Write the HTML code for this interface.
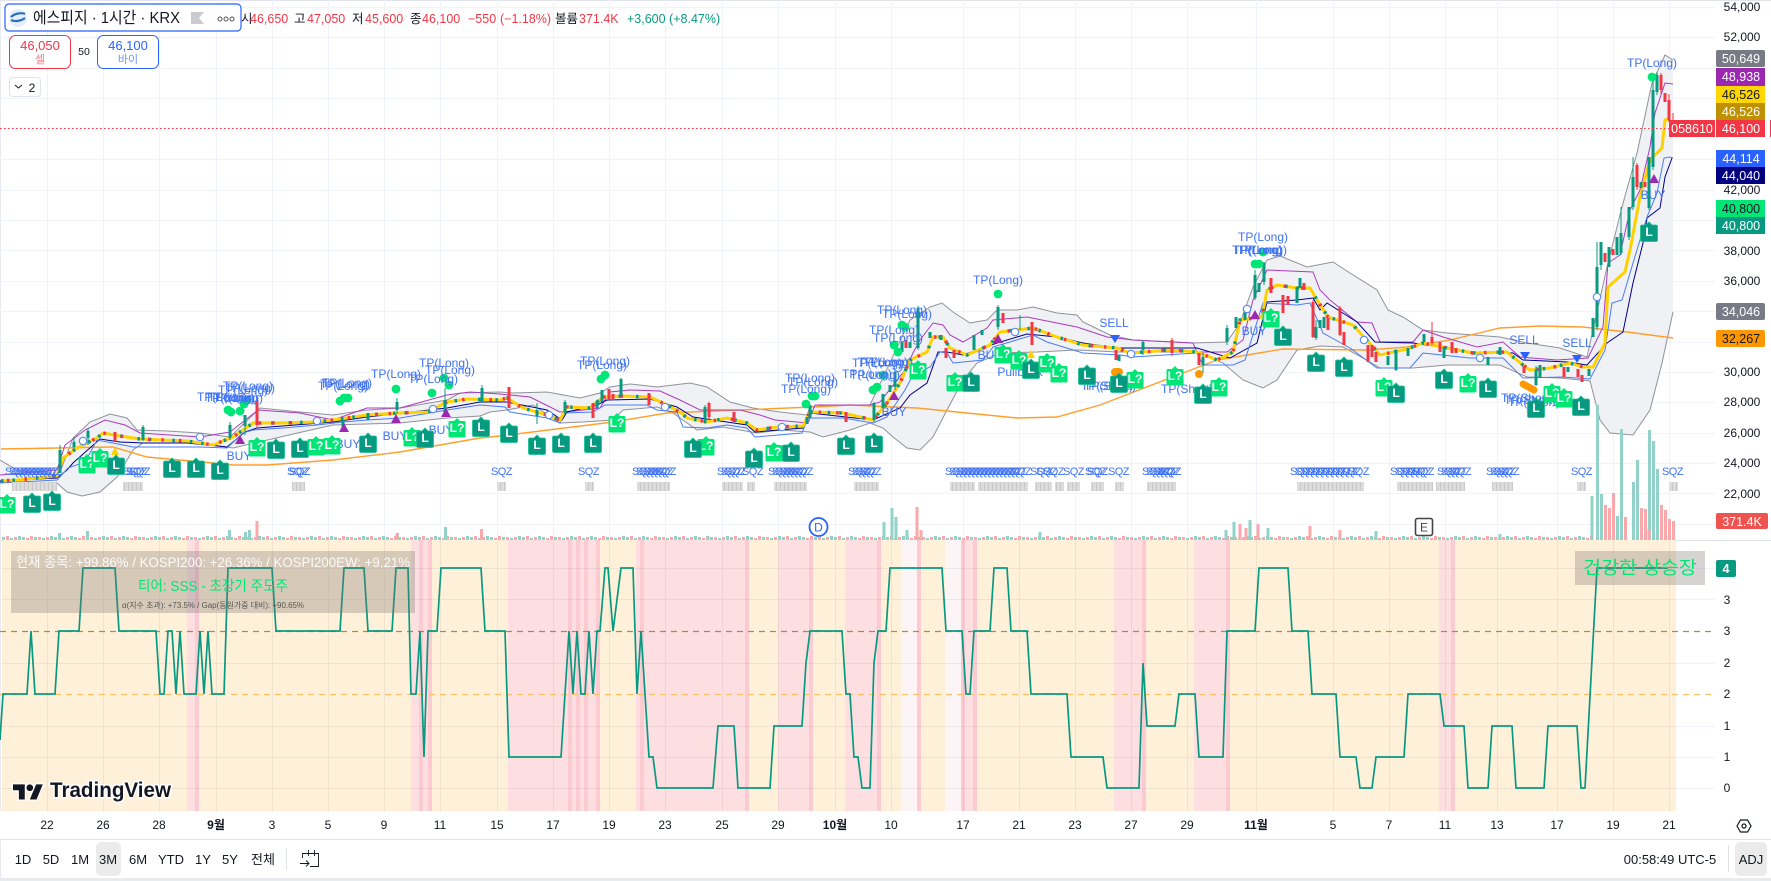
<!DOCTYPE html>
<html lang="ko"><head><meta charset="utf-8"><title>에스피지 차트</title>
<style>
html,body{margin:0;padding:0;background:#fff;width:1771px;height:881px;overflow:hidden}
svg{display:block;font-family:"Liberation Sans","Noto Sans CJK KR",sans-serif}
.ax text{font-size:12px;fill:#131722;text-anchor:middle}
.lb text{font-size:12.5px;text-anchor:middle;fill:#fff}
.tp text{font-size:12px;fill:#3f72f5;text-anchor:middle}
.sq text{font-size:11px;fill:#3f72f5;letter-spacing:-.6px}
.mk text{font-size:12px;font-weight:bold;fill:#fff;text-anchor:middle}
.g{fill:#00e676}.t{fill:#089981;stroke:#14c48f;stroke-width:.8}
.bt text{font-size:13px;fill:#131722;text-anchor:middle}
.lg text{font-size:12.5px;fill:#f23645}
.dots circle{r:4.4px}
</style></head><body>
<svg width="1771" height="881" viewBox="0 0 1771 881" xmlns="http://www.w3.org/2000/svg">
<defs>
<path id="b" d="M-7-7H-3L0-10 3-7H7Q8.5-7 8.5-5.5V8Q8.5 9.5 7 9.5H-7Q-8.5 9.5-8.5 8V-5.5Q-8.5-7-7-7Z"/>
<pattern id="vp" patternUnits="userSpaceOnUse" x="2" y="520" width="52" height="20">
<path d="M1.5 20v-3M9.5 20v-2M17.5 20v-4M21.5 20v-3M33.5 20v-3M41.5 20v-2M49.5 20v-4" stroke="#92d2c9" stroke-width="3" fill="none"/>
<path d="M5.5 20v-4M13.5 20v-3M25.5 20v-2M29.5 20v-4M37.5 20v-3M45.5 20v-3" stroke="#f9a8ab" stroke-width="3" fill="none"/>
</pattern>
<pattern id="bk" patternUnits="userSpaceOnUse" x="0" y="482" width="4" height="9">
<rect width="4" height="9" fill="#dcdcdc"/><rect width="1" height="9" fill="#c9c9c9"/>
</pattern>
<clipPath id="ck"><rect x="0" y="250" width="1590" height="250"/></clipPath>
<polyline id="yl" fill="none" points="1,481 17,480 57,476 63,458 77,448 97,438 103,433 120,436 140,439 187,441 213,445 233,437 243,430 253,423 283,423 317,422 347,418 367,415 400,413 427,412 447,402 467,399 500,400 507,398 523,408 547,415 560,420 567,407 590,408 603,397 623,396 650,397 667,405 680,412 687,418 707,422 727,418 747,423 757,430 777,427 803,426 810,412 843,413 873,420 887,403 900,383 910,360 927,352 933,337 943,337 950,348 967,355 990,345 1000,332 1033,328 1057,337 1083,345 1117,348 1130,353 1170,350 1197,352 1217,360 1233,352 1240,320 1262,317 1267,290 1277,285 1297,288 1310,288 1317,300 1328,317 1353,325 1373,347 1380,355 1407,349 1423,343 1447,348 1473,353 1507,352 1523,365 1530,370 1550,368 1570,363 1583,367 1593,367 1605,343 1608,287 1625,272 1630,250 1640,197 1650,160 1662,148 1665,120 1670,119"/>
</defs>
<rect width="1771" height="881" fill="#fff"/>
<rect width="1771" height="1" fill="#e0e3eb"/>
<rect width="1" height="878" fill="#e8eaf0"/>

<!-- main grid -->
<path fill="none" stroke="#f0f3fa" d="M0 7.5H1715M0 37.5H1715M0 68.5H1715M0 98.5H1715M0 128.5H1715M0 159.5H1715M0 190.5H1715M0 220.5H1715M0 250.5H1715M0 281.5H1715M0 311.5H1715M0 342.5H1715M0 372.5H1715M0 402.5H1715M0 433.5H1715M0 463.5H1715M0 493.5H1715M0 524.5H1715M47.5 0V811M103.5 0V811M159.5 0V811M216.5 0V811M272.5 0V811M328.5 0V811M384.5 0V811M440.5 0V811M497.5 0V811M553.5 0V811M609.5 0V811M665.5 0V811M722.5 0V811M778.5 0V811M835.5 0V811M891.5 0V811M963.5 0V811M1019.5 0V811M1075.5 0V811M1131.5 0V811M1187.5 0V811M1256.5 0V811M1333.5 0V811M1389.5 0V811M1445.5 0V811M1497.5 0V811M1557.5 0V811M1613.5 0V811M1669.5 0V811"/>

<!-- bollinger fill -->
<path fill="#f0f1f4" d="M0 460L17 470 57 475 62 467 73 438 90 422 110 414 127 418 137 430 167 431 200 433 230 437 260 408 300 412 333 415 367 410 400 408 447 400 460 393 500 392 513 393 547 392 580 398 600 393 610 387 630 384 657 387 690 383 707 387 730 402 753 408 780 412 807 415 810 407 830 405 870 405 910 320 930 307 942 303 953 312 970 323 987 320 997 310 1017 310 1033 307 1057 313 1077 315 1083 322 1110 335 1133 340 1193 343 1227 342 1240 323 1253 287 1267 260 1280 256 1307 267 1333 262 1350 273 1377 290 1388 310 1403 317 1423 330 1447 333 1500 337 1527 343 1560 348 1587 357 1607 267 1622 207 1637 153 1652 83 1665 55 1673 60V312L1662 363 1650 410 1633 435 1610 433 1600 420 1590 381 1560 378 1527 377 1500 365 1447 365 1413 368 1380 368 1363 358 1343 347 1320 346 1297 350 1277 380 1263 388 1243 380 1223 363 1197 352 1117 352 1077 350 1037 352 1000 353 977 363 963 380 947 410 933 437 920 450 907 448 893 437 883 428 870 423 850 430 823 437 810 432 780 430 757 433 723 427 697 430 673 413 657 407 623 410 613 420 583 422 560 423 533 405 507 410 490 412 480 416 447 418 400 423 333 425 302 432 233 448 200 443 143 443 133 450 117 477 100 492 82 496 67 492 57 483 0 482Z"/>
<path fill="none" stroke="#8f9299" d="M0 460L17 470 57 475 62 467 73 438 90 422 110 414 127 418 137 430 167 431 200 433 230 437 260 408 300 412 333 415 367 410 400 408 447 400 460 393 500 392 513 393 547 392 580 398 600 393 610 387 630 384 657 387 690 383 707 387 730 402 753 408 780 412 807 415 810 407 830 405 870 405 910 320 930 307 942 303 953 312 970 323 987 320 997 310 1017 310 1033 307 1057 313 1077 315 1083 322 1110 335 1133 340 1193 343 1227 342 1240 323 1253 287 1267 260 1280 256 1307 267 1333 262 1350 273 1377 290 1388 310 1403 317 1423 330 1447 333 1500 337 1527 343 1560 348 1587 357 1607 267 1622 207 1637 153 1652 83 1665 55 1673 60M1673 312L1662 363 1650 410 1633 435 1610 433 1600 420 1590 381 1560 378 1527 377 1500 365 1447 365 1413 368 1380 368 1363 358 1343 347 1320 346 1297 350 1277 380 1263 388 1243 380 1223 363 1197 352 1117 352 1077 350 1037 352 1000 353 977 363 963 380 947 410 933 437 920 450 907 448 893 437 883 428 870 423 850 430 823 437 810 432 780 430 757 433 723 427 697 430 673 413 657 407 623 410 613 420 583 422 560 423 533 405 507 410 490 412 480 416 447 418 400 423 333 425 302 432 233 448 200 443 143 443 133 450 117 477 100 492 82 496 67 492 57 483 0 482"/>

<!-- orange MA -->
<polyline fill="none" stroke="#ff9f2e" stroke-width="1.4" points="1,449 113,447 147,457 213,463 233,465 267,465 333,460 400,452 480,438 500,436 613,422 667,413 813,407 850,405 917,408 1017,418 1057,417 1100,405 1183,373 1217,360 1283,349 1367,350 1407,347 1450,340 1500,328 1540,326 1583,327 1627,332 1673,338"/>
<!-- purple -->
<polyline fill="none" stroke="#a93cc0" stroke-width="1" points="0,475 57,470 65,445 85,430 105,420 125,425 140,433 200,437 230,432 258,410 300,413 333,420 367,408 400,408 447,395 470,392 500,394 530,397 560,412 575,411 600,408 610,392 630,390 660,391 680,400 700,410 740,410 760,415 775,420 808,423 815,405 870,405 880,402 905,370 913,353 920,340 933,323 943,325 950,335 963,342 987,328 993,320 1027,317 1057,323 1077,327 1107,337 1133,340 1193,343 1197,352 1227,352 1243,340 1253,300 1267,270 1313,272 1320,290 1330,300 1357,322 1372,323 1380,342 1413,342 1423,330 1443,337 1477,347 1503,342 1520,357 1557,360 1588,358 1603,327 1608,263 1620,255 1630,210 1640,190 1650,147 1655,113 1665,83 1673,84"/>
<!-- navy -->
<polyline fill="none" stroke="#00008b" stroke-width="1" points="0,481 57,478 67,470 73,463 100,439 120,442 143,443 187,443 227,447 245,432 257,428 333,422 367,417 447,408 480,402 507,402 547,410 562,420 567,412 597,405 607,400 650,399 677,407 693,417 747,425 755,432 803,428 810,413 873,420 900,408 910,395 927,383 938,352 947,352 963,355 997,343 1027,334 1057,337 1083,343 1117,348 1197,348 1230,358 1257,343 1267,302 1297,300 1313,298 1320,310 1327,303 1357,322 1375,342 1413,343 1473,352 1513,353 1523,360 1567,362 1587,365 1607,343 1623,332 1633,283 1643,243 1647,218 1660,208 1665,177 1672,158"/>
<!-- blue -->
<polyline fill="none" stroke="#4a7bf7" stroke-width="1" points="0,483 57,480 68,468 85,462 97,440 113,443 133,447 167,447 200,447 227,448 243,433 253,430 283,428 317,425 343,422 367,420 400,418 447,410 480,405 505,407 510,412 547,418 560,423 565,413 593,412 605,405 647,405 657,410 677,412 683,427 707,428 727,425 747,428 755,437 802,433 808,418 843,418 873,423 887,417 905,390 913,375 930,367 940,352 947,353 953,363 983,360 993,347 1033,335 1047,342 1083,353 1120,355 1133,357 1197,353 1203,365 1233,365 1245,360 1263,303 1297,305 1310,303 1323,333 1350,348 1377,368 1410,368 1423,353 1470,358 1503,358 1523,378 1563,377 1590,379 1605,350 1612,303 1622,300 1633,263 1647,217 1657,193 1664,158 1670,157 1673,158"/>
<!-- yellow -->
<use href="#yl" stroke="#ffd100" stroke-width="3"/>
<g clip-path="url(#ck)">
<use href="#yl" stroke="#089981" stroke-width="3.5" stroke-dasharray="2.5 9 2.5 21 2.5 15"/>
<use href="#yl" stroke="#f23645" stroke-width="3.5" stroke-dasharray="2.5 15 2.5 25 2.5 11" stroke-dashoffset="-6"/>
</g>

<!-- candles wicks -->
<path fill="none" stroke="#089981" stroke-width="1" d="M60 445V473M74 437V450M88 428V445M143 425V441M230 422V440M245 420V435M343 418V432M397 398V414M445 388V414M482 385V403M537 403V424M565 400V414M621 378V396M705 405V424M874 402V422M895 368V390M918 306V350M998 305V330M1020 315V330M1143 340V355M1203 353V373M1227 325V345M1255 270V300M1264 262V285M1316 320V340M1396 349V371M1536 366V386M1597 242V330M1601 242V270M1621 207V255M1629 207V240M1633 157V210M1649 157V210M1653 75V170M1657 72V95"/>
<path fill="none" stroke="#f23645" stroke-width="1" d="M257 398V428M709 402V420M1172 338V356M1313 300V338M1340 306V336M1432 322V345M1637 163V190M1661 73V94M1669 94V122M1673 113V120"/>
<!-- candle bodies -->
<path fill="none" stroke="#089981" stroke-width="3" d="M60 450V473M74 442V447M88 431V438M143 427V440M230 425V438M245 415V426M343 420V428M368 413V420M397 402V410M445 400V412M482 388V402M537 410V416M565 402V413M597 401V408M602 390V402M621 379V395M705 407V423M807 417V424M810 405V418M874 403V420M883 394V408M890 385V392M895 372V387M902 342V352M910 342V348M918 308V348M930 332V338M941 335V340M974 335V350M982 330V335M998 307V327M1119 355V361M1143 342V350M1203 357V365M1227 328V342M1236 317V328M1245 310V320M1255 275V298M1259 283V292M1264 263V282M1297 287V303M1300 278V288M1316 327V338M1320 320V328M1324 317V328M1388 356V365M1396 350V370M1408 348V356M1424 334V342M1444 347V358M1488 357V365M1500 347V355M1536 370V385M1540 365V378M1568 367V372M1589 369V376M1593 318V337M1597 267V327M1601 242V265M1609 247V267M1617 237V255M1621 233V253M1629 207V237M1633 177V207M1641 182V188M1649 157V208M1653 90V167M1657 75V92"/>
<path fill="none" stroke="#f23645" stroke-width="3" d="M115 432V442M257 400V425M509 387V408M593 403V418M609 389V400M613 394V400M649 393V405M709 403V417M734 412V422M846 412V422M906 340V348M946 348V358M954 350V358M1003 313V323M1032 322V345M1116 350V360M1172 340V353M1199 353V365M1271 278V293M1283 295V313M1288 296V305M1304 283V290M1313 302V337M1328 318V330M1340 308V335M1344 332V345M1368 345V362M1372 345V357M1376 352V362M1432 337V343M1440 342V352M1452 342V353M1456 348V353M1524 366V373M1564 367V377M1578 369V377M1582 375V382M1605 253V262M1613 249V255M1637 165V187M1645 182V187M1661 75V90M1665 93V102M1669 100V120"/>

<!-- volume -->
<rect x="2" y="520" width="1590" height="20" fill="url(#vp)"/>
<path fill="none" stroke="#92d2c9" stroke-width="3" d="M59.5 540V533M87.5 540V531M229.5 540V530M245.5 540V532M249.5 540V530M445.5 540V527M397.5 540V533M708 540V536M892 540V508M896 540V517M884 540V522M907 540V530M1040 540V532M1226 540V530M1234 540V522M1250 540V520M1268 540V528M1376 540V531M1500 540V534M1592 540V496M1597.5 540V405M1601.5 540V494M1617.5 540V516M1621.5 540V429M1633.5 540V482M1637.5 540V460M1649.5 540V430M1653.5 540V441M1657.5 540V469"/>
<path fill="none" stroke="#f9a8ab" stroke-width="3" d="M257 540V521M481.5 540V529M397 540V534M917 540V507M921 540V530M1240 540V524M1246 540V528M1258 540V524M1310 540V526M1340 540V530M1605.5 540V505M1609.5 540V508M1613.5 540V493M1625.5 540V517M1641.5 540V508M1645.5 540V509M1649 540V529M1661.5 540V505M1665.5 540V510M1669.5 540V519M1673.5 540V521"/>

<!-- D / E -->
<circle cx="818.5" cy="527" r="9" fill="#fff" stroke="#2962ff" stroke-width="1.8"/>
<text x="818.5" y="531.5" font-size="12" fill="#2962ff" text-anchor="middle">D</text>
<rect x="1415.5" y="518.5" width="17" height="17" rx="2" fill="#fff" stroke="#444" stroke-width="1.6"/>
<text x="1424" y="531.5" font-size="12" fill="#444" text-anchor="middle">E</text>

<!-- gray squeeze blocks -->
<path fill="url(#bk)" d="M12 482h45v9H12zM123 482h20v9h-20zM292 482h13v9h-13zM497 482h9v9h-9zM585 482h9v9h-9zM637 482h33v9h-33zM722 482h21v9h-21zM747 482h8v9h-8zM774 482h33v9h-33zM854 482h25v9h-25zM950 482h25v9h-25zM978 482h50v9h-50zM1035 482h17v9h-17zM1055 482h9v9h-9zM1067 482h13v9h-13zM1091 482h13v9h-13zM1115 482h9v9h-9zM1147 482h29v9h-29zM1297 482h67v9h-67zM1397 482h36v9h-36zM1436 482h29v9h-29zM1492 482h21v9h-21zM1577 482h9v9h-9zM1669 482h9v9h-9z"/>

<!-- SQZ -->
<g class="sq">
<text x="5" y="475">SQZ</text><text x="9" y="475">SQZ</text><text x="13" y="475">SQZ</text><text x="17" y="475">SQZ</text><text x="21" y="475">SQZ</text><text x="25" y="475">SQZ</text><text x="29" y="475">SQZ</text><text x="33" y="475">SQZ</text><text x="37" y="475">SQZ</text><text x="41" y="475">SQZ</text>
<text x="123" y="475">SQZ</text><text x="126" y="475">SQZ</text><text x="129" y="475">SQZ</text>
<text x="287" y="475">SQZ</text><text x="289" y="475">SQZ</text>
<text x="491" y="475">SQZ</text><text x="578" y="475">SQZ</text>
<text x="632" y="475">SQZ</text><text x="636" y="475">SQZ</text><text x="640" y="475">SQZ</text><text x="644" y="475">SQZ</text><text x="648" y="475">SQZ</text><text x="652" y="475">SQZ</text><text x="655" y="475">SQZ</text>
<text x="717" y="475">SQZ</text><text x="721" y="475">SQZ</text><text x="725" y="475">SQZ</text><text x="742" y="475">SQZ</text>
<text x="768" y="475">SQZ</text><text x="772" y="475">SQZ</text><text x="776" y="475">SQZ</text><text x="780" y="475">SQZ</text><text x="784" y="475">SQZ</text><text x="788" y="475">SQZ</text><text x="792" y="475">SQZ</text>
<text x="848" y="475">SQZ</text><text x="852" y="475">SQZ</text><text x="856" y="475">SQZ</text><text x="860" y="475">SQZ</text>
<text x="945" y="475">SQZ</text><text x="949" y="475">SQZ</text><text x="953" y="475">SQZ</text><text x="957" y="475">SQZ</text><text x="961" y="475">SQZ</text><text x="965" y="475">SQZ</text><text x="969" y="475">SQZ</text><text x="973" y="475">SQZ</text><text x="977" y="475">SQZ</text><text x="981" y="475">SQZ</text><text x="985" y="475">SQZ</text><text x="989" y="475">SQZ</text><text x="993" y="475">SQZ</text><text x="997" y="475">SQZ</text><text x="1001" y="475">SQZ</text><text x="1005" y="475">SQZ</text><text x="1010" y="475">SQZ</text>
<text x="1030" y="475">SQZ</text><text x="1036" y="475">SQZ</text><text x="1043" y="475">SQZ</text><text x="1063" y="475">SQZ</text><text x="1085" y="475">SQZ</text><text x="1087" y="475">SQZ</text><text x="1108" y="475">SQZ</text>
<text x="1142" y="475">SQZ</text><text x="1146" y="475">SQZ</text><text x="1150" y="475">SQZ</text><text x="1154" y="475">SQZ</text><text x="1158" y="475">SQZ</text><text x="1160" y="475">SQZ</text>
<text x="1290" y="475">SQZ</text><text x="1295" y="475">SQZ</text><text x="1300" y="475">SQZ</text><text x="1305" y="475">SQZ</text><text x="1310" y="475">SQZ</text><text x="1315" y="475">SQZ</text><text x="1320" y="475">SQZ</text><text x="1325" y="475">SQZ</text><text x="1330" y="475">SQZ</text><text x="1335" y="475">SQZ</text><text x="1340" y="475">SQZ</text><text x="1348" y="475">SQZ</text>
<text x="1390" y="475">SQZ</text><text x="1395" y="475">SQZ</text><text x="1400" y="475">SQZ</text><text x="1405" y="475">SQZ</text><text x="1410" y="475">SQZ</text><text x="1413" y="475">SQZ</text>
<text x="1437" y="475">SQZ</text><text x="1441" y="475">SQZ</text><text x="1445" y="475">SQZ</text><text x="1450" y="475">SQZ</text>
<text x="1486" y="475">SQZ</text><text x="1490" y="475">SQZ</text><text x="1494" y="475">SQZ</text><text x="1498" y="475">SQZ</text>
<text x="1571" y="475">SQZ</text><text x="1662" y="475">SQZ</text>
</g>

<!-- green TP dots -->
<g class="dots" fill="#00e676">
<circle cx="228" cy="410" r="4"/><circle cx="231" cy="412" r="4"/><circle cx="240" cy="411" r="4"/><circle cx="244" cy="404" r="4"/><circle cx="247" cy="400" r="4"/><circle cx="340" cy="401" r="4"/><circle cx="344" cy="398" r="4"/><circle cx="348" cy="398" r="4"/><circle cx="396" cy="389" r="4"/><circle cx="432" cy="393" r="4"/><circle cx="444" cy="378" r="4"/><circle cx="449" cy="385" r="4"/><circle cx="601" cy="379" r="4"/><circle cx="605" cy="375" r="4"/><circle cx="806" cy="404" r="4"/><circle cx="812" cy="396" r="4"/><circle cx="815" cy="396" r="4"/><circle cx="873" cy="390" r="4"/><circle cx="877" cy="387" r="4"/><circle cx="883" cy="375" r="4"/><circle cx="894" cy="345" r="4"/><circle cx="898" cy="352" r="4"/><circle cx="902" cy="325" r="4"/><circle cx="905" cy="327" r="4"/><circle cx="998" cy="294" r="4"/><circle cx="1255" cy="264" r="4"/><circle cx="1259" cy="264" r="4"/><circle cx="1263" cy="252" r="4"/><circle cx="1652" cy="77" r="4"/>
</g>
<!-- orange dots -->
<g fill="#ff9800"><rect x="1111" y="368" width="12" height="8" rx="4"/><circle cx="1199" cy="374" r="4"/><path d="M1523 384L1534 390" stroke="#ff9800" stroke-width="7" stroke-linecap="round"/></g>
<!-- hollow circles -->
<g fill="#fff" stroke="#5a8bf0" stroke-width="1.2"><circle cx="83" cy="441" r="3.7"/><circle cx="200" cy="437" r="3.7"/><circle cx="317" cy="421" r="3.7"/><circle cx="433" cy="409" r="3.7"/><circle cx="549" cy="415" r="3.7"/><circle cx="665" cy="407" r="3.7"/><circle cx="782" cy="427" r="3.7"/><circle cx="898" cy="368" r="3.7"/><circle cx="1015" cy="332" r="3.7"/><circle cx="1131" cy="354" r="3.7"/><circle cx="1247" cy="309" r="3.7"/><circle cx="1364" cy="340" r="3.7"/><circle cx="1480" cy="358" r="3.7"/><circle cx="1597" cy="297" r="3.7"/></g>
<!-- triangles -->
<g fill="#9c27b0"><path d="M240 435l5 9h-10zM344 423l5 9h-10zM396 414l5 9h-10zM446 408l5 9h-10zM894 391l5 9h-10zM998 334l5 9h-10zM1255 310l5 9h-10zM1654 174l5 9h-10z"/></g>
<path fill="#ffd100" d="M115 447l4 8h-8zM1031 350l4 8h-8z"/>
<path fill="#2962ff" d="M1110 335h10l-5 8zM1520 352h10l-5 8zM1572 355h10l-5 8z"/>

<!-- blue signal text -->
<g class="tp">
<text x="248" y="390">TP(Long)</text><text x="250" y="392">TP(Long)</text><text x="243" y="394">TP(Long)</text><text x="233" y="401">TP(Long)</text><text x="230" y="402">TP(Long)</text><text x="222" y="401">TP(Long)</text><text x="238" y="402">TP(Long)</text>
<text x="347" y="387">TP(Long)</text><text x="345" y="388">TP(Long)</text><text x="343" y="390">TP(Long)</text>
<text x="396" y="378">TP(Long)</text><text x="444" y="367">TP(Long)</text><text x="450" y="374">TP(Long)</text><text x="433" y="383">TP(Long)</text>
<text x="605" y="365">TP(Long)</text><text x="602" y="369">TP(Long)</text>
<text x="810" y="382">TP(Long)</text><text x="813" y="386">TP(Long)</text><text x="806" y="393">TP(Long)</text>
<text x="902" y="314">TP(Long)</text><text x="907" y="318">TP(Long)</text><text x="894" y="334">TP(Long)</text><text x="898" y="342">TP(Long)</text><text x="883" y="366">TP(Long)</text><text x="888" y="366">TP(Long)</text><text x="877" y="367">TP(Long)</text><text x="867" y="378">TP(Long)</text><text x="875" y="379">TP(Long)</text>
<text x="998" y="284">TP(Long)</text><text x="1263" y="241">TP(Long)</text><text x="1258" y="254">TP(Long)</text><text x="1257" y="254">TP(Long)</text><text x="1262" y="254">TP(Long)</text><text x="1652" y="67">TP(Long)</text>
<text x="239" y="460">BUY</text><text x="348" y="448">BUY</text><text x="395" y="440">BUY</text><text x="441" y="434">BUY</text><text x="894" y="416">BUY</text><text x="990" y="359">BUY</text><text x="1254" y="335">BUY</text><text x="1653" y="199">BUY</text>
<text x="1020" y="376">Pullback</text>
<text x="1107" y="390">TP(Short)</text><text x="1110" y="390">TP(Short)</text><text x="1187" y="393">TP(Short)</text>
<text x="1527" y="402">TP(Short)</text><text x="1530" y="404">TP(Short)</text><text x="1534" y="406">TP(Short)</text>
<text x="1114" y="327">SELL</text><text x="1524" y="344">SELL</text><text x="1577" y="347">SELL</text>
</g>

<!-- L markers -->
<g class="mk">
<use class="g" href="#b" x="87" y="464"/><text x="87" y="468">L?</text>
<use class="g" href="#b" x="100" y="458"/><text x="100" y="462">L?</text>
<use class="t" href="#b" x="116" y="465"/><text x="116" y="469">L</text>
<use class="t" href="#b" x="172" y="468"/><text x="172" y="472">L</text>
<use class="t" href="#b" x="196" y="468"/><text x="196" y="472">L</text>
<use class="t" href="#b" x="220" y="470"/><text x="220" y="474">L</text>
<use class="g" href="#b" x="257" y="447"/><text x="257" y="451">L?</text>
<use class="t" href="#b" x="276" y="449"/><text x="276" y="453">L</text>
<use class="t" href="#b" x="300" y="448"/><text x="300" y="452">L</text>
<use class="g" href="#b" x="316" y="446"/><text x="316" y="450">L?</text>
<use class="g" href="#b" x="332" y="445"/><text x="332" y="449">L?</text>
<use class="t" href="#b" x="368" y="443"/><text x="368" y="447">L</text>
<use class="g" href="#b" x="412" y="437"/><text x="412" y="441">L?</text>
<use class="t" href="#b" x="425" y="438"/><text x="425" y="442">L</text>
<use class="g" href="#b" x="457" y="428"/><text x="457" y="432">L?</text>
<use class="t" href="#b" x="481" y="427"/><text x="481" y="431">L</text>
<use class="g" href="#b" x="7" y="504"/><text x="7" y="508">L?</text>
<use class="t" href="#b" x="32" y="503"/><text x="32" y="507">L</text>
<use class="t" href="#b" x="52" y="501"/><text x="52" y="505">L</text>
<use class="t" href="#b" x="509" y="433"/><text x="509" y="437">L</text>
<use class="t" href="#b" x="537" y="445"/><text x="537" y="449">L</text>
<use class="t" href="#b" x="561" y="443"/><text x="561" y="447">L</text>
<use class="t" href="#b" x="593" y="443"/><text x="593" y="447">L</text>
<use class="g" href="#b" x="617" y="423"/><text x="617" y="427">L?</text>
<use class="g" href="#b" x="706" y="446"/><text x="706" y="450">L?</text>
<use class="t" href="#b" x="693" y="448"/><text x="693" y="452">L</text>
<use class="t" href="#b" x="754" y="458"/><text x="754" y="462">L</text>
<use class="g" href="#b" x="774" y="452"/><text x="774" y="456">L?</text>
<use class="t" href="#b" x="791" y="452"/><text x="791" y="456">L</text>
<use class="t" href="#b" x="846" y="445"/><text x="846" y="449">L</text>
<use class="t" href="#b" x="874" y="443"/><text x="874" y="447">L</text>
<use class="g" href="#b" x="918" y="370"/><text x="918" y="374">L?</text>
<use class="g" href="#b" x="955" y="382"/><text x="955" y="386">L?</text>
<use class="t" href="#b" x="971" y="382"/><text x="971" y="386">L</text>
<use class="g" href="#b" x="1003" y="354"/><text x="1003" y="358">L?</text>
<use class="g" href="#b" x="1019" y="360"/><text x="1019" y="364">L?</text>
<use class="t" href="#b" x="1031" y="369"/><text x="1031" y="373">L</text>
<use class="g" href="#b" x="1047" y="363"/><text x="1047" y="367">L?</text>
<use class="g" href="#b" x="1059" y="373"/><text x="1059" y="377">L?</text>
<use class="t" href="#b" x="1087" y="375"/><text x="1087" y="379">L</text>
<use class="g" href="#b" x="1135" y="379"/><text x="1135" y="383">L?</text>
<use class="t" href="#b" x="1119" y="383"/><text x="1119" y="387">L</text>
<use class="g" href="#b" x="1175" y="376"/><text x="1175" y="380">L?</text>
<use class="g" href="#b" x="1219" y="387"/><text x="1219" y="391">L?</text>
<use class="t" href="#b" x="1203" y="394"/><text x="1203" y="398">L</text>
<use class="g" href="#b" x="1271" y="318"/><text x="1271" y="322">L?</text>
<use class="t" href="#b" x="1283" y="336"/><text x="1283" y="340">L</text>
<use class="t" href="#b" x="1316" y="362"/><text x="1316" y="366">L</text>
<use class="t" href="#b" x="1344" y="367"/><text x="1344" y="371">L</text>
<use class="g" href="#b" x="1384" y="387"/><text x="1384" y="391">L?</text>
<use class="t" href="#b" x="1396" y="393"/><text x="1396" y="397">L</text>
<use class="t" href="#b" x="1444" y="379"/><text x="1444" y="383">L</text>
<use class="g" href="#b" x="1468" y="383"/><text x="1468" y="387">L?</text>
<use class="t" href="#b" x="1488" y="388"/><text x="1488" y="392">L</text>
<use class="g" href="#b" x="1552" y="393"/><text x="1552" y="397">L?</text>
<use class="g" href="#b" x="1564" y="398"/><text x="1564" y="402">L?</text>
<use class="t" href="#b" x="1536" y="408"/><text x="1536" y="412">L</text>
<use class="t" href="#b" x="1581" y="406"/><text x="1581" y="410">L</text>
<use class="t" href="#b" x="1649" y="232"/><text x="1649" y="236">L</text>
</g>

<!-- last price line -->
<path d="M0 128.5H1669" stroke="#f23645" stroke-dasharray="1.5 2.5" fill="none"/>

<!-- oscillator pane -->
<rect x="2" y="540" width="1674" height="271" fill="#fff0d9"/>
<path fill="#fddfe2" d="M187 540h12v271h-12zM411 540h21v271h-21zM508 540h92v271h-92zM636 540h113v271H636zM778 540h35v271h-35zM845 540h36v271h-36zM961 540h16v271h-16zM1114 540h32v271h-32zM1194 540h36v271h-36zM1439 540h16v271h-16z"/>
<path fill="#fdf5f5" d="M901 540h16v271h-16zM945 540h16v271h-16z"/>
<path fill="#fccbd2" d="M195 540h4v271h-4zM419 540h4v271h-4zM428 540h4v271h-4zM568 540h4v271h-4zM576 540h4v271h-4zM584 540h4v271h-4zM596 540h4v271h-4zM640 540h4v271h-4zM745 540h4v271h-4zM809 540h4v271h-4zM877 540h4v271h-4zM917 540h4v271h-4zM961 540h4v271h-4zM973 540h4v271h-4zM1142 540h4v271h-4zM1226 540h4v271h-4zM1451 540h4v271h-4z"/>
<path fill="none" stroke="#000" stroke-opacity=".055" d="M2 568.5H1676M2 599.5H1676M2 663.5H1676M2 726.5H1676M2 757.5H1676M2 788.5H1676M47.5 540V811M103.5 540V811M159.5 540V811M216.5 540V811M272.5 540V811M328.5 540V811M384.5 540V811M440.5 540V811M497.5 540V811M553.5 540V811M609.5 540V811M665.5 540V811M722.5 540V811M778.5 540V811M835.5 540V811M891.5 540V811M963.5 540V811M1019.5 540V811M1075.5 540V811M1131.5 540V811M1187.5 540V811M1256.5 540V811M1333.5 540V811M1389.5 540V811M1445.5 540V811M1497.5 540V811M1557.5 540V811M1613.5 540V811M1669.5 540V811"/>
<path fill="none" stroke="#f0f3fa" d="M1676 568.5H1715M1676 599.5H1715M1676 663.5H1715M1676 726.5H1715M1676 757.5H1715M1676 788.5H1715"/>
<path d="M0 631.5H1715" stroke="#a08a6a" stroke-width="1.2" stroke-dasharray="6 5" fill="none"/>
<path d="M0 694.5H1715" stroke="#f9c266" stroke-width="1.2" stroke-dasharray="6 5" fill="none"/>
<polyline fill="none" stroke="#089981" stroke-width="1.7" points="0,740 3,694 27,694 31,631 35,694 55,694 59,631 79,631 83,568 115,568 119,631 156,631 160,694 164,694 168,631 172,631 176,694 180,631 184,694 196,694 200,631 204,694 208,631 212,694 224,694 228,568 272,568 276,631 340,631 344,568 364,568 368,631 392,631 396,568 408,568 411,694 416,694 420,631 424,757 428,631 437,631 441,568 481,568 485,631 505,631 509,757 561,757 565,694 569,631 573,694 577,631 581,694 585,694 589,631 593,694 597,631 600,631 605,568 608,568 613,631 621,568 633,568 637,694 641,631 645,694 649,757 653,757 657,788 713,788 718,726 734,726 738,788 770,788 774,726 802,726 806,663 810,631 842,631 846,694 850,694 854,757 858,757 862,788 870,788 874,663 878,631 886,631 890,568 942,568 946,631 962,631 966,694 970,694 974,631 990,631 994,568 1007,568 1011,631 1027,631 1031,694 1067,694 1071,757 1103,757 1107,788 1139,788 1143,663 1147,726 1175,726 1179,694 1195,694 1199,757 1223,757 1227,631 1255,631 1259,568 1288,568 1292,631 1308,631 1312,694 1336,694 1340,757 1356,757 1360,788 1372,788 1376,757 1404,757 1408,694 1440,694 1444,726 1464,726 1468,788 1488,788 1492,726 1512,726 1516,788 1544,788 1548,726 1577,726 1581,788 1585,788 1597,568 1668,568"/>

<!-- info tables -->
<rect x="11" y="551" width="404" height="62" fill="#78706e" fill-opacity=".3"/>
<text x="16" y="567" font-size="14" fill="#fff" fill-opacity=".9" textLength="394" lengthAdjust="spacingAndGlyphs">현재 종목: +99.86% / KOSPI200: +26.36% / KOSPI200EW: +9.21%</text>
<text x="138" y="591" font-size="14.5" fill="#00e676" textLength="150" lengthAdjust="spacingAndGlyphs">티어: SSS - 초장기 주도주</text>
<text x="122" y="608" font-size="8" fill="#555" textLength="182" lengthAdjust="spacingAndGlyphs">α(지수 초과): +73.5% / Gap(동원가중 대비): +90.65%</text>
<rect x="1575" y="551" width="130" height="34" fill="#78706e" fill-opacity=".3"/>
<text x="1583" y="574" font-size="18" fill="#00e676" textLength="114" lengthAdjust="spacingAndGlyphs">건강한 상승장</text>

<!-- TradingView logo -->
<g transform="translate(13,781) scale(.84)" fill="#131722" stroke="#fff" stroke-width="3" paint-order="stroke"><path d="M14 22H7V11H0V4h14v18zM28 22h-8l7.5-18h8L28 22z"/><circle cx="20" cy="8" r="4"/></g>
<text x="50" y="797" font-size="21" font-weight="bold" fill="#131722" stroke="#fff" stroke-width="3" paint-order="stroke" textLength="121" lengthAdjust="spacingAndGlyphs">TradingView</text>

<!-- Price axis -->
<g class="ax">
<text x="1742" y="11">54,000</text><text x="1742" y="41">52,000</text><text x="1742" y="194">42,000</text><text x="1742" y="255">38,000</text><text x="1742" y="285">36,000</text><text x="1742" y="376">30,000</text><text x="1742" y="406">28,000</text><text x="1742" y="437">26,000</text><text x="1742" y="467">24,000</text><text x="1742" y="498">22,000</text>
<text x="1727" y="604">3</text><text x="1727" y="635">3</text><text x="1727" y="667">2</text><text x="1727" y="698">2</text><text x="1727" y="730">1</text><text x="1727" y="761">1</text><text x="1727" y="792">0</text>
</g>
<!-- price labels -->
<g fill="#787b86"><rect x="1716" y="50" width="49" height="17" rx="2"/><rect x="1716" y="303" width="49" height="17" rx="2"/></g>
<rect x="1716" y="68" width="49" height="18" fill="#9c27b0"/>
<rect x="1716" y="86" width="49" height="17" fill="#ffd600"/>
<rect x="1716" y="103" width="49" height="17" fill="#bf9000"/>
<rect x="1716" y="120" width="49" height="17" fill="#f23645"/>
<rect x="1669" y="120" width="46" height="17" fill="#f23645"/>
<rect x="1770" y="120" width="1" height="17" fill="#f23645"/>
<rect x="1716" y="150" width="49" height="17" fill="#2962ff"/>
<rect x="1716" y="167" width="49" height="17" fill="#000080"/>
<rect x="1716" y="200" width="49" height="17" fill="#00e676"/>
<rect x="1716" y="217" width="49" height="17" fill="#089981"/>
<rect x="1716" y="330" width="49" height="17" rx="2" fill="#ff9800"/>
<rect x="1716" y="513" width="52" height="16" rx="2" fill="#ef5350"/>
<rect x="1716" y="560" width="20" height="17" rx="2" fill="#089981"/>
<g class="lb">
<text x="1741" y="63">50,649</text><text x="1741" y="81">48,938</text><text x="1741" y="99" style="fill:#131722">46,526</text><text x="1741" y="116">46,526</text><text x="1741" y="133">46,100</text><text x="1692" y="133">058610</text><text x="1741" y="163">44,114</text><text x="1741" y="180">44,040</text><text x="1741" y="213" style="fill:#131722">40,800</text><text x="1741" y="230">40,800</text><text x="1741" y="316">34,046</text><text x="1741" y="343" style="fill:#131722">32,267</text><text x="1742" y="526">371.4K</text><text x="1726" y="573" style="font-weight:bold">4</text>
</g>
<path d="M0 540.5H2M1676 540.5H1771" stroke="#e0e3eb" fill="none"/>

<!-- Time axis -->
<rect x="0" y="811" width="1771" height="28" fill="#fff"/>
<g class="ax">
<text x="47" y="829">22</text><text x="103" y="829">26</text><text x="159" y="829">28</text><text x="216" y="829" font-weight="bold">9월</text><text x="272" y="829">3</text><text x="328" y="829">5</text><text x="384" y="829">9</text><text x="440" y="829">11</text><text x="497" y="829">15</text><text x="553" y="829">17</text><text x="609" y="829">19</text><text x="665" y="829">23</text><text x="722" y="829">25</text><text x="778" y="829">29</text><text x="835" y="829" font-weight="bold">10월</text><text x="891" y="829">10</text><text x="963" y="829">17</text><text x="1019" y="829">21</text><text x="1075" y="829">23</text><text x="1131" y="829">27</text><text x="1187" y="829">29</text><text x="1256" y="829" font-weight="bold">11월</text><text x="1333" y="829">5</text><text x="1389" y="829">7</text><text x="1445" y="829">11</text><text x="1497" y="829">13</text><text x="1557" y="829">17</text><text x="1613" y="829">19</text><text x="1669" y="829">21</text>
</g>
<path fill="none" stroke="#131722" stroke-width="1.2" d="M1737 826L1740.5 820H1747.5L1751 826 1747.5 832H1740.5Z"/><circle cx="1744" cy="826" r="2" fill="none" stroke="#131722" stroke-width="1.2"/>

<!-- Bottom toolbar -->
<rect x="0" y="839" width="1771" height="1" fill="#e0e3eb"/>
<rect x="0" y="878" width="1771" height="3" fill="#e8eaee"/>
<rect x="96" y="842" width="25" height="34" rx="5" fill="#ebebeb"/>
<rect x="1735" y="842" width="32" height="34" rx="5" fill="#ebebeb"/>
<g class="bt">
<text x="23" y="864">1D</text><text x="51" y="864">5D</text><text x="80" y="864">1M</text><text x="108" y="864">3M</text><text x="138" y="864">6M</text><text x="171" y="864">YTD</text><text x="203" y="864">1Y</text><text x="230" y="864">5Y</text><text x="263" y="864">전체</text>
<text x="1670" y="864">00:58:49 UTC-5</text><text x="1751" y="864">ADJ</text>
</g>
<path d="M286.5 848V870M1728.5 845V872" stroke="#e0e3eb" fill="none"/>
<path fill="none" stroke="#131722" stroke-width=".9" d="M302.5 858V853.5H318.5V866.5H310M308.5 850V856M314.5 850V856M300 863.5H309M306 860.5L309 863.5 306 866.5"/>

<!-- Header legend -->
<rect x="5" y="4" width="236" height="27" rx="4" fill="#fff" stroke="#2962ff" stroke-width="1.2"/>
<circle cx="18" cy="18" r="9" fill="#e3eef8"/>
<path d="M11 17c3-3 10-5 14-3M11 20c4 2 10 1 14-2" fill="none" stroke="#2a6fb8" stroke-width="2.2"/>
<text x="33" y="23" font-size="16" fill="#131722" textLength="147" lengthAdjust="spacingAndGlyphs">에스피지 · 1시간 · KRX</text>
<path fill="#c9cbd0" d="M191 12H204L199 18 204 24H191Z"/>
<g fill="none" stroke="#555" stroke-width="1"><circle cx="220" cy="19" r="2"/><circle cx="226" cy="19" r="2"/><circle cx="232" cy="19" r="2"/></g>
<g class="lg">
<text x="241" y="23" style="fill:#131722">시</text><text x="250" y="23">46,650</text>
<text x="294" y="23" style="fill:#131722">고</text><text x="307" y="23">47,050</text>
<text x="352" y="23" style="fill:#131722">저</text><text x="365" y="23">45,600</text>
<text x="410" y="23" style="fill:#131722">종</text><text x="422" y="23">46,100</text>
<text x="468" y="23">−550</text><text x="500" y="23">(−1.18%)</text>
<text x="555" y="23" style="fill:#131722">볼륨</text><text x="579" y="23">371.4K</text>
<text x="627" y="23" style="fill:#089981">+3,600 (+8.47%)</text>
</g>
<rect x="9.5" y="35.5" width="61" height="33" rx="6" fill="#fff" stroke="#f23645"/>
<text x="40" y="50" font-size="13" fill="#f23645" text-anchor="middle">46,050</text>
<text x="40" y="63" font-size="11" fill="#f77c80" text-anchor="middle">셀</text>
<text x="84" y="55" font-size="10.5" fill="#131722" text-anchor="middle">50</text>
<rect x="97.5" y="35.5" width="61" height="33" rx="6" fill="#fff" stroke="#2962ff"/>
<text x="128" y="50" font-size="13" fill="#2962ff" text-anchor="middle">46,100</text>
<text x="128" y="63" font-size="11" fill="#6d93fb" text-anchor="middle">바이</text>
<rect x="9.5" y="77.5" width="31" height="19" rx="3" fill="#fff" stroke="#e0e3eb"/>
<path d="M15 85l3.5 3 3.5-3" fill="none" stroke="#131722"/>
<text x="32" y="92" font-size="12" fill="#131722" text-anchor="middle">2</text>
</svg>
</body></html>
